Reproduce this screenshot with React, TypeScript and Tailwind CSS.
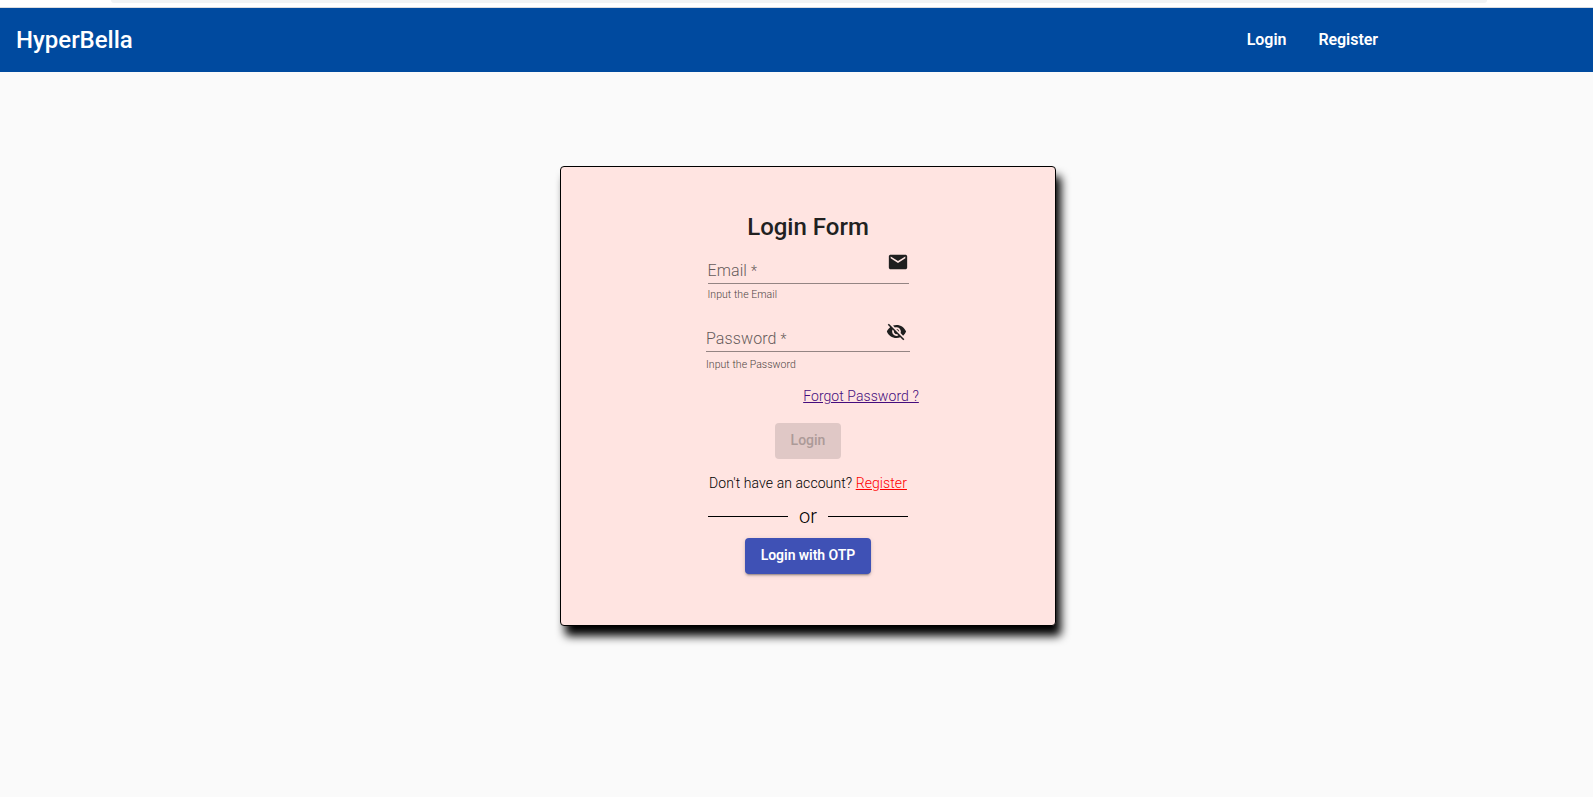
import React from "react";

function MailIcon() {
  return (
    <svg className="-mt-[0.5px] size-[22px] fill-[#1f1f1f]" viewBox="0 0 24 24">
      <path d="M20 4H4c-1.1 0-1.99.9-1.99 2L2 18c0 1.1.9 2 2 2h16c1.1 0 2-.9 2-2V6c0-1.1-.9-2-2-2zm0 4l-8 5-8-5V6l8 5 8-5v2z" />
    </svg>
  );
}

function VisibilityOffIcon() {
  return (
    <svg className="mt-px size-[21px] fill-[#1f1f1f]" viewBox="0 0 24 24">
      <path d="M12 7c2.76 0 5 2.24 5 5 0 .65-.13 1.26-.36 1.83l2.92 2.92c1.51-1.26 2.7-2.89 3.43-4.75-1.73-4.39-6-7.5-11-7.5-1.4 0-2.74.25-3.98.7l2.16 2.16C10.74 7.13 11.35 7 12 7zM2 4.27l2.28 2.28.46.46C3.08 8.3 1.78 10.02 1 12c1.73 4.39 6 7.5 11 7.5 1.55 0 3.03-.3 4.38-.84l.42.42L19.73 22 21 20.73 3.27 3 2 4.27zM7.53 9.8l1.55 1.55c-.05.21-.08.43-.08.65 0 1.66 1.34 3 3 3 .22 0 .44-.03.65-.08l1.55 1.55c-.67.33-1.41.53-2.2.53-2.76 0-5-2.24-5-5 0-.79.2-1.53.53-2.2zm4.31-.78l3.15 3.15.02-.16c0-1.66-1.34-3-3-3l-.17.01z" />
    </svg>
  );
}

export default function App() {
  return (
    <div className="flex min-h-screen flex-col bg-[#fafafa] font-[Roboto,sans-serif] text-[#212121]">
      <div className="flex h-2 flex-col items-center border-b border-[#dadce0] bg-white pl-1">
        <div className="h-[3px] w-[1376px] rounded-b-[12px] bg-[#f1f3f4]" />
      </div>
      <header className="flex h-16 items-center justify-between bg-[#004a9f] pl-4 pr-[215px] font-medium text-white">
        <h1 className="text-2xl font-medium">HyperBella</h1>
        <nav className="flex gap-8 text-base font-semibold tracking-[-0.05px]">
          <a href="#login">Login</a>
          <a href="#register">Register</a>
        </nav>
      </header>
      <main className="flex justify-center pl-[23px] pt-[94px]">
        <form className="flex h-[460px] w-[496px] flex-col items-center rounded border border-black bg-[#ffe4e1] pt-[44px] shadow-[5px_10px_10px_#000]">
          <h2 className="h-8 text-2xl font-medium leading-8">Login Form</h2>
          <div className="mt-[8px] flex h-[33px] w-[201px] items-start justify-between border-b border-[#948483]">
            <span className="pt-[8px] text-base font-light leading-6 tracking-[0.1px] text-[#665b5a]">Email <span className="text-sm">*</span></span>
            <MailIcon />
          </div>
          <div className="h-5 w-[201px] pt-px text-[10.5px] font-light leading-5 tracking-[0.05px] text-[#4d4443]">Input the Email</div>
          <div className="mt-[16px] flex h-[32px] w-[204px] items-start justify-between border-b border-[#948483] pr-[3px]">
            <span className="pt-[7px] text-base font-light leading-6 tracking-[0.1px] text-[#665b5a]">Password <span className="text-sm">*</span></span>
            <VisibilityOffIcon />
          </div>
          <div className="h-5 w-[204px] pt-[3px] text-[10.5px] font-light leading-5 tracking-[0.05px] text-[#4d4443]">Input the Password</div>
          <a href="#forgot" className="ml-[106px] mt-[14px] h-5 text-sm font-light leading-5 tracking-[0.07px] text-[#450c7d] underline">Forgot Password ?</a>
          <button type="button" disabled className="mt-[17px] h-9 w-[66px] rounded bg-[#e0c8c6] pb-0.5 text-sm font-medium text-[#ac9a98]">Login</button>
          <p className="mt-[14px] h-5 text-sm font-light leading-5 tracking-[0.08px] text-black">
            Don't have an account? <a href="#register" className="text-[#f00] underline">Register</a>
          </p>
          <div className="mt-[9px] flex h-7 w-[200px] items-center justify-between">
            <span className="h-px w-20 bg-black" />
            <span className="text-xl font-light text-black">or</span>
            <span className="h-px w-20 bg-black" />
          </div>
          <button type="button" className="mt-[8px] h-9 w-[126px] rounded bg-[#3f51b5] pb-0.5 text-sm font-semibold tracking-[-0.05px] text-white shadow-[0_3px_1px_-2px_rgba(0,0,0,.2),0_2px_2px_rgba(0,0,0,.14),0_1px_5px_rgba(0,0,0,.12)]">Login with OTP</button>
        </form>
      </main>
    </div>
  );
}
